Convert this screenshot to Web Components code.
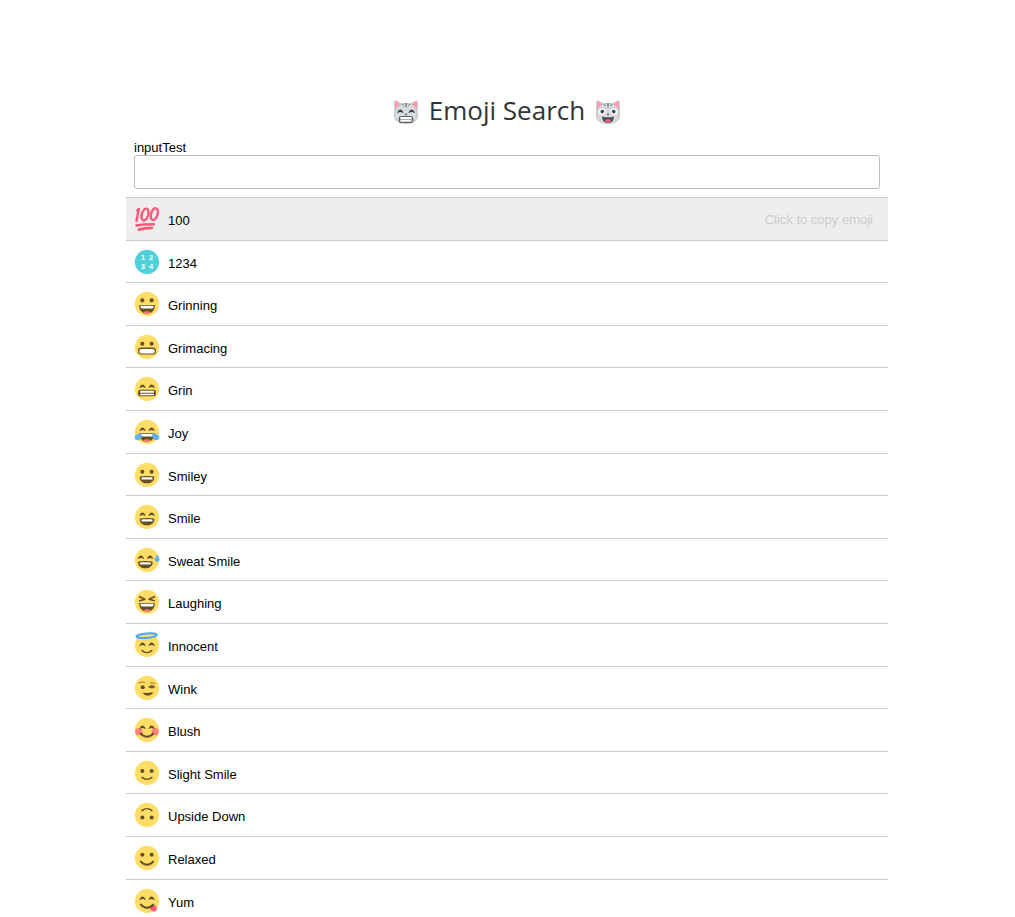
<!DOCTYPE html>
<html lang="en">
<head>
<meta charset="utf-8">
<meta name="viewport" content="width=device-width, initial-scale=1">
<title>Emoji Search</title>
<style>
  body { margin: 0; background: #fff; color: #000; font: 13px/15px "Liberation Sans", Arial, sans-serif; }
</style>
</head>
<body>
<emoji-app></emoji-app>

<script>
// ---- Artwork, drawn on a 64x64 grid ----
const face = '<circle cx="32" cy="32" r="30" fill="#ffdd67"/>';
const dots = (y, r = 5) => `<g fill="#664e27"><circle cx="20.5" cy="${y}" r="${r}"/><circle cx="43.5" cy="${y}" r="${r}"/></g>`;
const arcPath = 'M28.5 28.7c-1.9-5.1-4.7-7.7-7.5-7.7s-5.6 2.6-7.5 7.7c-.2.5.8 1.4 1.3.9 1.8-1.9 4-2.7 6.2-2.7 2.2 0 4.4.8 6.2 2.7.6.5 1.5-.4 1.3-.9';
const arcs = `<g fill="#664e27"><path d="${arcPath}"/><path transform="translate(22.5)" d="${arcPath}"/></g>`;
const smile = '<path fill="none" stroke="#664e27" stroke-width="4" stroke-linecap="round" d="M20 43c7 6 17 6 24 0"/>';
const wideSmile = '<path fill="none" stroke="#664e27" stroke-width="5" stroke-linecap="round" d="M17 41c8 10 22 10 30 0"/>';
const openMouth = '<path fill="#664e27" d="M50 38c0-.8-.5-1.800-1.800-2.100-3.500-.7-9.600-1.300-16.200-1.300-6.600 0-12.700.7-16.200 1.300-1.400.3-1.800 1.300-1.800 2.100 0 7.300 6.600 14.600 18 14.600S50 45.300 50 38"/><path fill="#fff" d="M19 38c8-1 18-1 26 0 1 0 1 4 0 5H19c-1-1-1-5 0-5"/>';
const bigMouth = '<path fill="#664e27" d="M50 34.500H14c-1 0-1.500.8-1.400 2C13 47 20 56 32 56s19-9 19.400-19.500c.1-1.200-.4-2-1.400-2"/><path fill="#fff" d="M16 36.500h32v3c0 2-1 3.500-3 3.500H19c-2 0-3-1.500-3-3.500z"/>';
const tongue = '<path fill="#ff717f" d="M32 50c-4.500 0-7.500 1.500-8 3.500 4.500 3 11.500 3 16 0C39.500 51.500 36.500 50 32 50"/>';
const grinMouth = '<rect x="10" y="34" width="44" height="16" rx="6" fill="#664e27"/><path fill="#fff" d="M15 36.500h34v4.500H15zM15 43.500h34v4H15z"/>';

const catBase = `
  <path fill="#c9ced2" d="M3 8c0-4 2-6 6-4l13 7c6-2 14-2 20 0l13-7c4-2 6 0 6 4 1 9 1 16 0 22 2 12 1 18-5 24-6 5-14 8-24 8S14 59 8 54C2 48 1 42 3 30 2 24 2 17 3 8"/>
  <path fill="#d8dcdf" d="M10 27c3-10 11-14 22-14s19 4 22 14c5 12 5 20-2 26-5 4-11 6-20 6s-15-2-20-6c-7-6-7-14-2-26"/>
  <path fill="#ff9dac" d="M5 9c0-3 2-3 4-2l10 6C12 16 9 20 7 26 5 20 4 15 5 9m54 0c0-3-2-3-4-2l-10 6c7 3 10 7 12 13 2-6 3-11 2-17"/>
  <path fill="#8b949b" d="M29 10h6l-1 11h-4zM20 12l5-1 2 8zM44 12l-5-1-2 8z"/>
  <path fill="#59626a" d="M28 36h8l-4 5z"/>`;

const art = {
  catGrin: catBase + `<g fill="#3e4347"><path transform="translate(-3 5)" d="${arcPath}"/><path transform="translate(25 5)" d="${arcPath}"/></g>
    <rect x="14" y="42" width="36" height="17" rx="7" fill="#59626a"/><path fill="#fff" d="M18 44h28v6H18zM18 51h28v5H18z"/>`,
  catSmile: catBase + `<g fill="#fff"><circle cx="17" cy="31" r="8"/><circle cx="47" cy="31" r="8"/></g><g fill="#3e4347"><circle cx="18" cy="31" r="4.500"/><circle cx="46" cy="31" r="4.500"/></g>
    <path fill="#4c5359" d="M19 43c4 2 9 2 13 1 4 1 9 1 13-1 2 0 2 3 1 6-2 7-7 10-14 10s-12-3-14-10c-1-3-1-6 1-6"/><path fill="#ff5a79" d="M32 50c-4 0-7 2-7 5 4 4 10 4 14 0 0-3-3-5-7-5"/>`,
  hundred: `<g fill="none" stroke="#ff5a79" stroke-linecap="round" stroke-linejoin="round">
    <path stroke-width="6" d="M8 11l4-4-6 30"/>
    <ellipse cx="27" cy="21" rx="8" ry="15" stroke-width="6" transform="rotate(17 27 21)"/>
    <ellipse cx="50" cy="20" rx="8" ry="15" stroke-width="6" transform="rotate(17 50 20)"/>
    <path stroke-width="6" d="M6 48c14-3 28-3 43-3"/><path stroke-width="7" d="M12 58c10-3 21-4 32-4"/></g>`,
  numbers: `<circle cx="32" cy="32" r="30" fill="#4fd1d9"/><g fill="#fff" font-family="Liberation Sans, sans-serif" font-weight="700" font-size="18" text-anchor="middle"><text x="22" y="28">1</text><text x="42" y="28">2</text><text x="22" y="49">3</text><text x="42" y="49">4</text></g>`,
  grinning: face + dots(23) + bigMouth + tongue,
  grimacing: face + dots(24) + '<rect x="10" y="33.500" width="44" height="17" rx="8" fill="#664e27"/><rect x="13" y="37" width="38" height="11" rx="5" fill="#fff"/>',
  grin: face + arcs + grinMouth,
  joy: face + arcs + bigMouth + tongue + '<g fill="#65b1ef"><path d="M18 34c3 8 0 18-8 18-8 0-11-7-6-12 3-3 9-2 14-6"/><path d="M46 34c-3 8 0 18 8 18 8 0 11-7 6-12-3-3-9-2-14-6"/></g>',
  smiley: face + dots(24) + openMouth,
  smile: face + arcs + openMouth,
  sweat: face + '<g transform="translate(-4)">' + arcs + openMouth + '</g><path fill="#65b1ef" d="M57 19c-4 6-6 9-6 12 0 4 3 6 6 6s6-2 6-6c0-3-2-6-6-12"/>',
  laughing: face + '<path fill="none" stroke="#664e27" stroke-width="4" stroke-linecap="round" stroke-linejoin="round" d="M14 19l13 6-13 4M50 19l-13 6 13 4"/>' + bigMouth + tongue,
  innocent: face + '<g transform="translate(0 5)">' + arcs + '</g><g transform="translate(0 3)">' + smile + '</g><ellipse cx="31" cy="9" rx="25" ry="5.500" fill="none" stroke="#4aa9ff" stroke-width="5" transform="rotate(-5 31 9)"/>',
  wink: face + '<circle cx="21.500" cy="30" r="5" fill="#664e27"/><g fill="none" stroke="#664e27" stroke-linecap="round"><path stroke-width="2" d="M12 20c4-3 9-4 14-1M40 20c4-2 9-1 12 2"/><path stroke-width="3" d="M37 30c4-4 10-4 14 0M40 31l7 0"/></g><path fill="#664e27" d="M45 42c-7 3-14 3-21 1-2 0-2 2-1 3 7 7 18 6 23-2 1-1 0-2-1-2"/>',
  blush: face + '<g fill="#ff717f" opacity=".85"><circle cx="12" cy="36" r="9"/><circle cx="52" cy="36" r="9"/></g>' + arcs + wideSmile,
  slight: face + dots(27) + smile,
  upside: face + '<g transform="rotate(180 32 32)">' + dots(26) + smile + '</g>',
  relaxed: face + dots(24) + wideSmile,
  yum: face + arcs + '<path fill="#ff5a79" d="M41 45c4-6 12-4 14 2 3 6 0 11-5 11-5 0-10-5-11-9z"/>' + wideSmile
};

const template = html => {
  const t = document.createElement('template');
  t.innerHTML = html;
  return t;
};

class Base extends HTMLElement {
  constructor() {
    super();
    this.attachShadow({ mode: 'open' }).append(this.constructor.template.content.cloneNode(true));
  }
}

class EmojiIcon extends Base {
  static observedAttributes = ['name'];
  static template = template(`
    <style>:host { display: block; flex: none; width: 26px; height: 26px } svg { display: block; width: 100%; height: 100% }</style>
    <svg viewBox="0 0 64 64" aria-hidden="true"></svg>`);
  attributeChangedCallback(attribute, before, name) {
    this.shadowRoot.querySelector('svg').innerHTML = art[name] || '';
  }
}
customElements.define('emoji-icon', EmojiIcon);

class EmojiHeader extends Base {
  static template = template(`
    <style>
      :host { display: flex; justify-content: center; align-items: center; gap: 10px; }
      h1 { margin: 0; padding-bottom: 4px; color: #333; font: 400 26px/36px "Open Sans", sans-serif; white-space: nowrap; }
    </style>
    <emoji-icon name="catGrin"></emoji-icon>
    <h1><slot></slot></h1>
    <emoji-icon name="catSmile"></emoji-icon>`);
}
customElements.define('emoji-header', EmojiHeader);

class SearchField extends Base {
  static template = template(`
    <style>
      :host { display: block; padding: 8px; }
      label { display: block; }
      input { display: block; box-sizing: border-box; width: 100%; height: 34px; padding: 8px; border: 1px solid #bbb; border-radius: 3px; background: #fff; font: inherit; outline: none; }
      input:focus { border-color: #888; }
    </style>
    <label for="query"><slot></slot></label>
    <input id="query" type="text" autocomplete="off">`);
  connectedCallback() {
    const input = this.shadowRoot.querySelector('input');
    input.addEventListener('input', () =>
      this.dispatchEvent(new CustomEvent('search', { detail: input.value, bubbles: true, composed: true })));
  }
}
customElements.define('search-field', SearchField);

class EmojiRow extends Base {
  static template = template(`
    <style>
      :host { display: block; border-bottom: 1px solid #ccc; }
      :host([hidden]) { display: none; }
      button { display: flex; align-items: center; gap: 8px; box-sizing: border-box; width: 100%; height: 100%; margin: 0; padding: 0 15px 0 8px; border: 0; background: none; color: inherit; font: inherit; text-align: left; cursor: pointer; }
      .name { flex: 1; padding-top: 3px; }
      .hint { display: none; color: #ccc; }
      :host([active]) button, button:hover { background: #eee; }
      :host([active]) .hint, button:hover .hint { display: block; }
    </style>
    <button type="button">
      <emoji-icon></emoji-icon>
      <span class="name"><slot></slot></span>
      <span class="hint">Click to copy emoji</span>
    </button>`);
  connectedCallback() {
    this.setAttribute('role', 'listitem');
    this.shadowRoot.querySelector('emoji-icon').setAttribute('name', this.getAttribute('icon'));
    this.shadowRoot.querySelector('button').addEventListener('click', () =>
      navigator.clipboard?.writeText(this.getAttribute('symbol')));
  }
}
customElements.define('emoji-row', EmojiRow);

class EmojiList extends Base {
  static template = template(`
    <style>:host { display: grid; grid-auto-rows: 43px 42px 43px 42px 43px; border-top: 1px solid #ccc; }</style>
    <slot></slot>`);
  connectedCallback() { this.setAttribute('role', 'list'); }
}
customElements.define('emoji-list', EmojiList);

class EmojiApp extends Base {
  static template = template(`
    <style>
      :host { display: block; box-sizing: border-box; height: 100vh; overflow-y: auto; scrollbar-width: none; padding: 92px 127px 0 126px; }
    </style>
    <emoji-header>Emoji Search</emoji-header>
    <search-field>inputTest</search-field>
    <emoji-list>
      <emoji-row icon="hundred" symbol="💯" active>100</emoji-row>
      <emoji-row icon="numbers" symbol="🔢">1234</emoji-row>
      <emoji-row icon="grinning" symbol="😀">Grinning</emoji-row>
      <emoji-row icon="grimacing" symbol="😬">Grimacing</emoji-row>
      <emoji-row icon="grin" symbol="😁">Grin</emoji-row>
      <emoji-row icon="joy" symbol="😂">Joy</emoji-row>
      <emoji-row icon="smiley" symbol="😃">Smiley</emoji-row>
      <emoji-row icon="smile" symbol="😄">Smile</emoji-row>
      <emoji-row icon="sweat" symbol="😅">Sweat Smile</emoji-row>
      <emoji-row icon="laughing" symbol="😆">Laughing</emoji-row>
      <emoji-row icon="innocent" symbol="😇">Innocent</emoji-row>
      <emoji-row icon="wink" symbol="😉">Wink</emoji-row>
      <emoji-row icon="blush" symbol="😊">Blush</emoji-row>
      <emoji-row icon="slight" symbol="🙂">Slight Smile</emoji-row>
      <emoji-row icon="upside" symbol="🙃">Upside Down</emoji-row>
      <emoji-row icon="relaxed" symbol="☺️">Relaxed</emoji-row>
      <emoji-row icon="yum" symbol="😋">Yum</emoji-row>
    </emoji-list>`);
  connectedCallback() {
    this.shadowRoot.addEventListener('search', e => {
      const q = e.detail.trim().toLowerCase();
      for (const row of this.shadowRoot.querySelectorAll('emoji-row'))
        row.hidden = !row.textContent.toLowerCase().includes(q);
    });
  }
}
customElements.define('emoji-app', EmojiApp);
</script>
</body>
</html>
